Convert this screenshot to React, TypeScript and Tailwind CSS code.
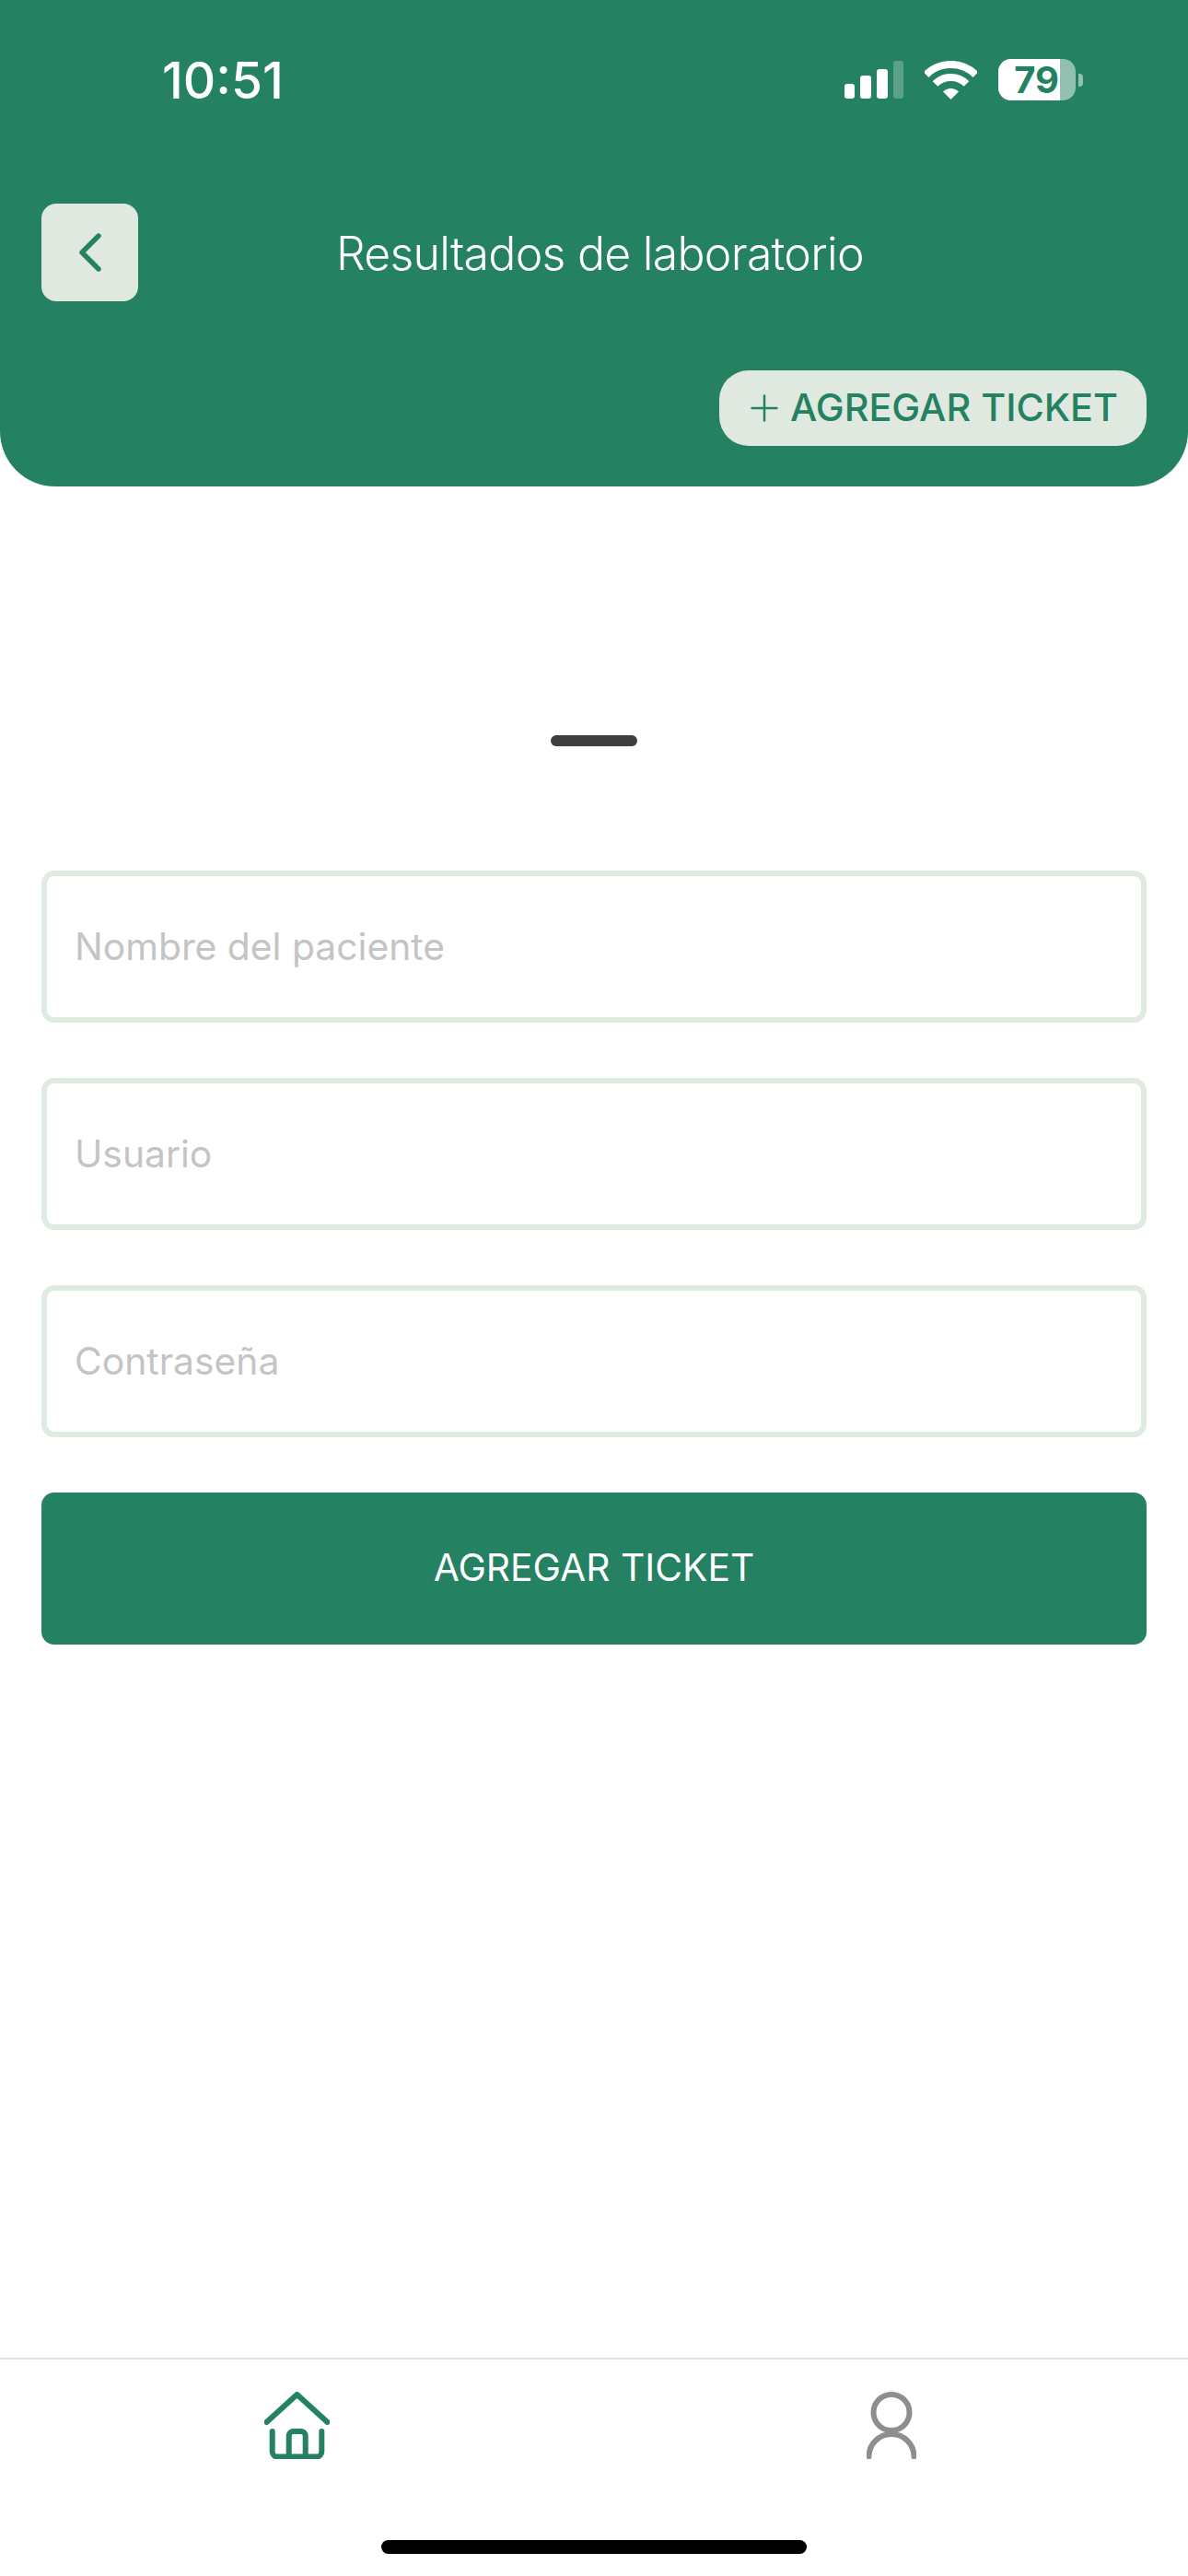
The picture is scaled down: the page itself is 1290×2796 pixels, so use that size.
import { ChevronLeft, Plus } from 'lucide-react';

const fields = ['Nombre del paciente', 'Usuario', 'Contraseña'];

function StatusIcons() {
  return (
    <div className="flex items-center">
      <div className="flex items-end gap-[6px] h-[41px]">
        <div className="w-[11px] h-[16px] rounded-[3px] bg-white" />
        <div className="w-[12px] h-[25px] rounded-[3px] bg-white" />
        <div className="w-[12px] h-[32px] rounded-[3px] bg-white" />
        <div className="w-[11px] h-[41px] rounded-[3px] bg-white/25" />
      </div>
      <svg width="57" height="42" viewBox="0 0 57 42" fill="none" className="ml-[23px] text-white">
        <path d="M1.6 15.1A38 38 0 0 1 55.4 15.1" stroke="currentColor" strokeWidth="8" />
        <path d="M11.5 25A24 24 0 0 1 45.5 25" stroke="currentColor" strokeWidth="8" />
        <path d="M28.5 42L20 33.5A12 12 0 0 1 37 33.5Z" fill="currentColor" />
      </svg>
      <div className="flex items-center ml-[23px]">
        <div className="flex w-[84px] h-[45px] rounded-[14px] bg-white/50">
          <div className="flex w-[67px] items-center justify-end rounded-l-[14px] bg-white pr-[1px] text-[#248162] text-[40px] leading-none font-bold">
            79
          </div>
        </div>
        <div className="w-[5px] h-[14px] ml-[3px] rounded-r-[4px] bg-white/50" />
      </div>
    </div>
  );
}

function HomeIcon() {
  return (
    <svg width="71" height="73" viewBox="0 0 71 73" fill="none" stroke="#248162" strokeWidth="6" strokeLinecap="round" strokeLinejoin="round">
      <path d="M2.5 33L35.5 3L68.5 33" />
      <path d="M8.7 43V65A5.6 5.6 0 0 0 14.3 70.6H56.7A5.6 5.6 0 0 0 62.3 65V43" />
      <path d="M26.7 70V48A5 5 0 0 1 31.7 43H39.7A5 5 0 0 1 44.7 48V70" />
    </svg>
  );
}

function UserIcon() {
  return (
    <svg width="54" height="73" viewBox="0 0 54 73" fill="none" stroke="#8e8e8e" strokeWidth="6" strokeLinecap="round">
      <circle cx="27" cy="22.5" r="19.5" />
      <path d="M2.5 70.5A24.5 24.5 0 0 1 51.5 70.5" />
    </svg>
  );
}

export default function App() {
  return (
    <div className="flex flex-col h-[2796px] bg-white font-['Inter',sans-serif]">
      <header className="bg-[#248162] rounded-b-[60px] h-[528px] px-[45px]">
        <div className="flex items-center justify-between pt-[66px] h-[109px]">
          <span className="ml-[131px] text-white text-[55px] leading-none font-medium">10:51</span>
          <div className="mr-[69px] mt-[-2px]"><StatusIcons /></div>
        </div>
        <div className="flex items-center mt-[112px]">
          <button className="flex items-center justify-center w-[105px] h-[106px] rounded-[16px] bg-[#dfe9e0]">
            <ChevronLeft size={72} strokeWidth={1.8} color="#248162" />
          </button>
          <h1 className="ml-[215px] mt-[1px] text-white text-[50px] tracking-[-0.75px] font-light leading-none">Resultados de laboratorio</h1>
        </div>
        <div className="flex justify-end mt-[75px]">
          <button className="flex items-center h-[82px] w-[464px] pl-[26px] rounded-[32px] bg-[#dfe9e0] text-[#248162] text-[41.3px] font-medium leading-none">
            <Plus size={46} strokeWidth={1.3} className="mr-[5px]" />
            AGREGAR TICKET
          </button>
        </div>
      </header>

      <main className="flex-1 px-[45px]">
        <div className="w-[94px] h-[12px] mx-auto mt-[270px] rounded-full bg-[#3f3f3f]" />
        <form className="flex flex-col gap-[60px] mt-[135px]">
          {fields.map((field) => (
            <input
              key={field}
              placeholder={field}
              className="h-[165px] px-[30px] pb-[2px] rounded-[14px] border-[6px] border-[#dfeae0] text-[40.8px] outline-none placeholder:text-[#c4c4c4]"
            />
          ))}
          <button type="button" className="h-[165px] pb-[2px] rounded-[14px] bg-[#248162] text-white text-[40.8px]">
            AGREGAR TICKET
          </button>
        </form>
      </main>

      <nav className="h-[237px] border-t-2 border-[#e0e0e0]">
        <div className="flex pt-[35px]">
          <div className="ml-[287px]"><HomeIcon /></div>
          <div className="ml-[583px]"><UserIcon /></div>
        </div>
        <div className="w-[462px] h-[15px] mx-auto mt-[88px] rounded-full bg-black" />
      </nav>
    </div>
  );
}
